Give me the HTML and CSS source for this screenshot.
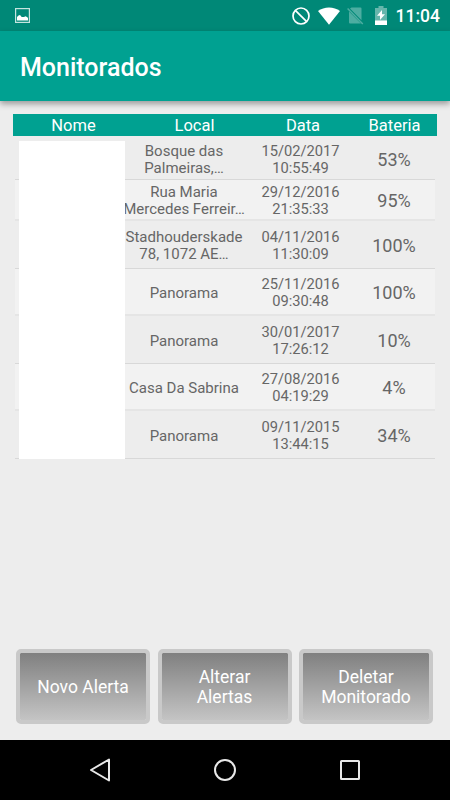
FILE: index.html
```html
<!DOCTYPE html>
<html lang="pt-BR">
<head>
  <meta charset="utf-8">
  <title>Monitorados</title>
  <link rel="stylesheet" href="styles.css">
</head>
<body>

  <div class="status-bar">
    <svg class="icon-picture" width="15" height="15" viewBox="0 0 15 15">
      <rect x="0.6" y="0.6" width="13.8" height="13.8" fill="none" stroke="#c5e4df" stroke-width="1.2"/>
      <path d="M2 12.5V9l1.500-1.500L5 7l1.700 2H9l1.500-.7L12 9l1 1v2.500z" fill="#fff"/>
    </svg>
    <div class="status-icons">
      <svg width="18" height="18" viewBox="0 0 18 18" fill="none" stroke="#fff" stroke-width="1.7">
        <circle cx="9" cy="9" r="8"/>
        <path d="M3.300 3.300l11.400 11.400"/>
      </svg>
      <svg class="icon-wifi" width="22" height="18" viewBox="0 0 22 18">
        <path d="M0 4C6-.8 16-.8 22 4L11 17.800z" fill="#fff"/>
      </svg>
      <svg class="icon-sim" width="17" height="18" viewBox="0 0 17 18">
        <path d="M4.500.5H13.500Q14.500.5 14.500 1.500V13.200L3 1.500zM2 4.500L14 16.500H3Q2 16.500 2 15.500z" fill="#4dada1"/>
        <path d="M.6 1.500L15.800 17" stroke="#4dada1" stroke-width="1.500"/>
      </svg>
      <svg class="icon-battery" width="12" height="19" viewBox="0 0 12 19">
        <path d="M3.500 0h5v2H12v17H0V2h3.500z" fill="#66b6ac"/>
        <path d="M0 14.500h12V19H0zM7 4v4.300h3L5 14v-4.200H2z" fill="#fff"/>
      </svg>
      <span class="clock">11:04</span>
    </div>
  </div>

  <div class="toolbar">Monitorados</div>

  <div class="content">
    <div class="table-header">
      <span>Nome</span><span>Local</span><span>Data</span><span>Bateria</span>
    </div>

    <div class="list">
      <div class="row short">
        <div class="place">Bosque das<br>Palmeiras,…</div>
        <div class="date">15/02/2017<br>10:55:49</div>
        <div class="battery">53%</div>
      </div>
      <div class="row short">
        <div class="place">Rua Maria<br>Mercedes Ferreir…</div>
        <div class="date">29/12/2016<br>21:35:33</div>
        <div class="battery">95%</div>
      </div>
      <div class="row">
        <div class="place">Stadhouderskade<br>78, 1072 AE…</div>
        <div class="date">04/11/2016<br>11:30:09</div>
        <div class="battery">100%</div>
      </div>
      <div class="row">
        <div class="place">Panorama</div>
        <div class="date">25/11/2016<br>09:30:48</div>
        <div class="battery">100%</div>
      </div>
      <div class="row">
        <div class="place">Panorama</div>
        <div class="date">30/01/2017<br>17:26:12</div>
        <div class="battery">10%</div>
      </div>
      <div class="row">
        <div class="place">Casa Da Sabrina</div>
        <div class="date">27/08/2016<br>04:19:29</div>
        <div class="battery">4%</div>
      </div>
      <div class="row">
        <div class="place">Panorama</div>
        <div class="date">09/11/2015<br>13:44:15</div>
        <div class="battery">34%</div>
      </div>
      <!-- hides the names -->
      <div class="name-cover"></div>
    </div>

    <div class="actions">
      <button>Novo Alerta</button>
      <button>Alterar<br>Alertas</button>
      <button>Deletar<br>Monitorado</button>
    </div>
  </div>

  <div class="nav-bar">
    <svg width="24" height="26" viewBox="0 0 24 26" fill="none" stroke="#e8e8e8" stroke-width="2" stroke-linejoin="round">
      <path d="M3 13L21 2.500V23.500z"/>
    </svg>
    <svg width="24" height="24" viewBox="0 0 24 24" fill="none" stroke="#e8e8e8" stroke-width="2">
      <circle cx="12" cy="12" r="10"/>
    </svg>
    <svg width="24" height="24" viewBox="0 0 24 24" fill="none" stroke="#e8e8e8" stroke-width="2">
      <rect x="3" y="3" width="18" height="18" rx="0.5"/>
    </svg>
  </div>

</body>
</html>
```

FILE: styles.css
```css
* {
  box-sizing: border-box;
}
body {
  margin: 0;
  width: 450px;
  height: 800px;
  display: flex;
  flex-direction: column;
  overflow: hidden;
  background: #ededed;
  font-family: Roboto, sans-serif;
}
svg {
  display: block;
  flex: none;
}
.status-bar {
  height: 31px;
  background: #008877;
  display: flex;
  align-items: center;
  justify-content: space-between;
  padding: 0 10px 0 15px;
}
.status-icons {
  display: flex;
  align-items: center;
}
.icon-wifi {
  margin-left: 8px;
}
.icon-sim {
  margin-left: 7px;
}
.icon-battery {
  margin-left: 11px;
}
.clock {
  margin-left: 9px;
  color: #fff;
  font-size: 17.500px;
  font-weight: 500;
  line-height: 31px;
  padding-top: 2px;
}
.toolbar {
  height: 70px;
  padding: 2px 20px 0;
  background: #00a191;
  color: #fff;
  font-size: 25px;
  font-weight: 500;
  line-height: 70px;
  box-shadow: 0 3px 6px rgba(0,0,0,0.35);
}
.content {
  flex: 1;
  display: flex;
  flex-direction: column;
  padding: 13px 13px 16px;
}
.table-header {
  display: grid;
  grid-template-columns: 121px 121px 96px 87px;
  width: 424px;
  height: 22px;
  background: #00a191;
  color: #fff;
  font-size: 16.500px;
  line-height: 24px;
  text-align: center;
}
.list {
  position: relative;
  margin: 2px 2px 0;
  padding-top: 1px;
}
.row {
  display: grid;
  grid-template-columns: 122px 111px 76px;
  align-items: center;
  height: 47.500px;
  padding: 2px 0 0 108px;
  border-bottom: 1px solid #d8d8d8;
  color: #666;
  font-size: 15px;
  line-height: 17px;
  text-align: center;
}
.row.short {
  height: 41px;
}
.row:nth-child(even) {
  background: #f2f2f2;
  border-bottom: 2px solid #e5e5e5;
}
.place, .date {
  white-space: nowrap;
  padding-top: 2px;
}
.short .place, .short .date {
  padding-top: 0;
}
.date {
  font-size: 14.700px;
}
.battery {
  font-size: 18px;
}
.short:first-child .battery {
  padding-bottom: 2px;
}
.name-cover {
  position: absolute;
  left: 4px;
  top: 3px;
  width: 106px;
  height: 318px;
  background: #fff;
}
.actions {
  display: grid;
  grid-template-columns: repeat(3, 134px);
  gap: 7.500px;
  margin-top: auto;
  padding-left: 3px;
}
button {
  height: 75px;
  padding: 1px 0 0;
  border: 4px solid #c9c9c9;
  border-radius: 5px;
  background: linear-gradient(#808080, #c4c4c4);
  background-clip: padding-box;
  color: #fff;
  font-family: inherit;
  font-size: 17.500px;
  line-height: 20.500px;
}
.nav-bar {
  height: 60px;
  background: #000;
  display: flex;
  align-items: center;
  justify-content: space-between;
  padding: 0 88px;
}
```
